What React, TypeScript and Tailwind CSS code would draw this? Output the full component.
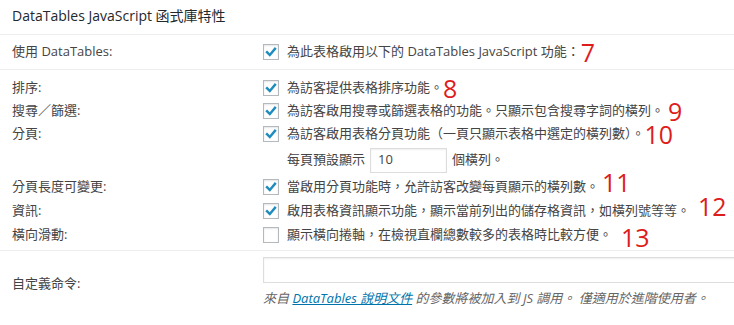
import React from 'react';

const font = 'font-["Open_Sans","Noto_Sans_CJK_TC",sans-serif]';

function Checkbox({ checked }: { checked?: boolean }) {
  return (
    <span className="flex h-4 w-4 shrink-0 items-center justify-center border border-[#b4b9be] bg-white shadow-[inset_0_1px_2px_rgba(0,0,0,0.1)]">
      {checked && (
        <svg width="14" height="14" viewBox="0 0 14 14">
          <path d="M3 7.2 L5.8 10 L11 3.8" fill="none" stroke="#1e8cbe" strokeWidth="2.4" strokeLinecap="square" />
        </svg>
      )}
    </span>
  );
}

function Num({ n, className = '' }: { n: string; className?: string }) {
  return (
    <span
      className={`relative inline-flex h-[18px] items-center text-[25px] leading-none font-medium text-[#dd1c1c] ${className}`}
    >
      {n}
    </span>
  );
}

interface RowProps {
  label?: string;
  height: string;
  children: React.ReactNode;
}

function Row({ label, height, children }: RowProps) {
  return (
    <div className={`flex items-center ${height}`}>
      <div className="w-[263px] shrink-0 pl-3">{label}</div>
      <div className="flex items-center">{children}</div>
    </div>
  );
}

function Option({ checked, text, num }: { checked?: boolean; text: string; num?: React.ReactNode }) {
  return (
    <>
      <Checkbox checked={checked} />
      <span className="ml-[8px] whitespace-nowrap">{text}</span>
      {num}
    </>
  );
}

export default function App() {
  return (
    <div className={`h-[325px] w-[734px] overflow-hidden bg-white text-[13px] text-[#444] ${font}`}>
      <div className="flex h-[35px] items-center border-b border-[#eeeeee] pl-3 pb-[3px] text-[14px] text-[#23282d]">
        DataTables JavaScript 函式庫特性
      </div>

      <div className="border-b border-[#eeeeee]">
        <Row label="使用 DataTables:" height="h-[34px]">
          <Option
            checked
            text="為此表格啟用以下的 DataTables JavaScript 功能："
            num={<Num n="7" className="ml-[1px]" />}
          />
        </Row>
      </div>

      <div className="border-b border-[#eeeeee] pt-[6px] pb-[3px]">
        <Row label="排序:" height="h-[23px]">
          <Option checked text="為訪客提供表格排序功能。" num={<Num n="8" className="top-[1px]" />} />
        </Row>
        <Row label="搜尋／篩選:" height="h-[23px]">
          <Option
            checked
            text="為訪客啟用搜尋或篩選表格的功能。只顯示包含搜尋字詞的橫列。"
            num={<Num n="9" className="ml-[4px] top-[1px]" />}
          />
        </Row>
        <Row label="分頁:" height="h-[23px]">
          <Option
            checked
            text="為訪客啟用表格分頁功能（一頁只顯示表格中選定的橫列數）。"
            num={<Num n="10" className="top-[1px]" />}
          />
        </Row>
        <Row height="h-[30px]">
          <span className="ml-[24px]">每頁預設顯示</span>
          <span className="ml-[5px] flex h-[25px] w-[77px] items-center border border-[#dddddd] pl-[7px] shadow-[inset_0_1px_2px_rgba(0,0,0,0.07)]">
            10
          </span>
          <span className="ml-[5px]">個橫列。</span>
        </Row>
        <Row label="分頁長度可變更:" height="h-[24px]">
          <Option
            checked
            text="當啟用分頁功能時，允許訪客改變每頁顯示的橫列數。"
            num={<Num n="11" className="ml-[3px] -top-[5px]" />}
          />
        </Row>
        <Row label="資訊:" height="h-[24px]">
          <Option
            checked
            text="啟用表格資訊顯示功能，顯示當前列出的儲存格資訊，如橫列號等等。"
            num={<Num n="12" className="ml-[8px] -top-[5px]" />}
          />
        </Row>
        <Row label="橫向滑動:" height="h-[24px]">
          <Option text="顯示橫向捲軸，在檢視直欄總數較多的表格時比較方便。" num={<Num n="13" className="ml-[9px] top-[2px]" />} />
        </Row>
      </div>

      <div className="flex">
        <div className="flex w-[263px] shrink-0 items-center pl-3 pt-[8px]">自定義命令:</div>
        <div className="flex flex-col pt-[6px]">
          <div className="h-[26px] w-[490px] border border-[#dddddd] shadow-[inset_0_1px_2px_rgba(0,0,0,0.07)]" />
          <p className="mt-[6px] whitespace-nowrap italic text-[#666]">
            來自 <span className="text-[#0073aa] underline">DataTables 說明文件</span> 的參數將被加入到 JS 調用。 僅適用於進階使用者。
          </p>
        </div>
      </div>
    </div>
  );
}
